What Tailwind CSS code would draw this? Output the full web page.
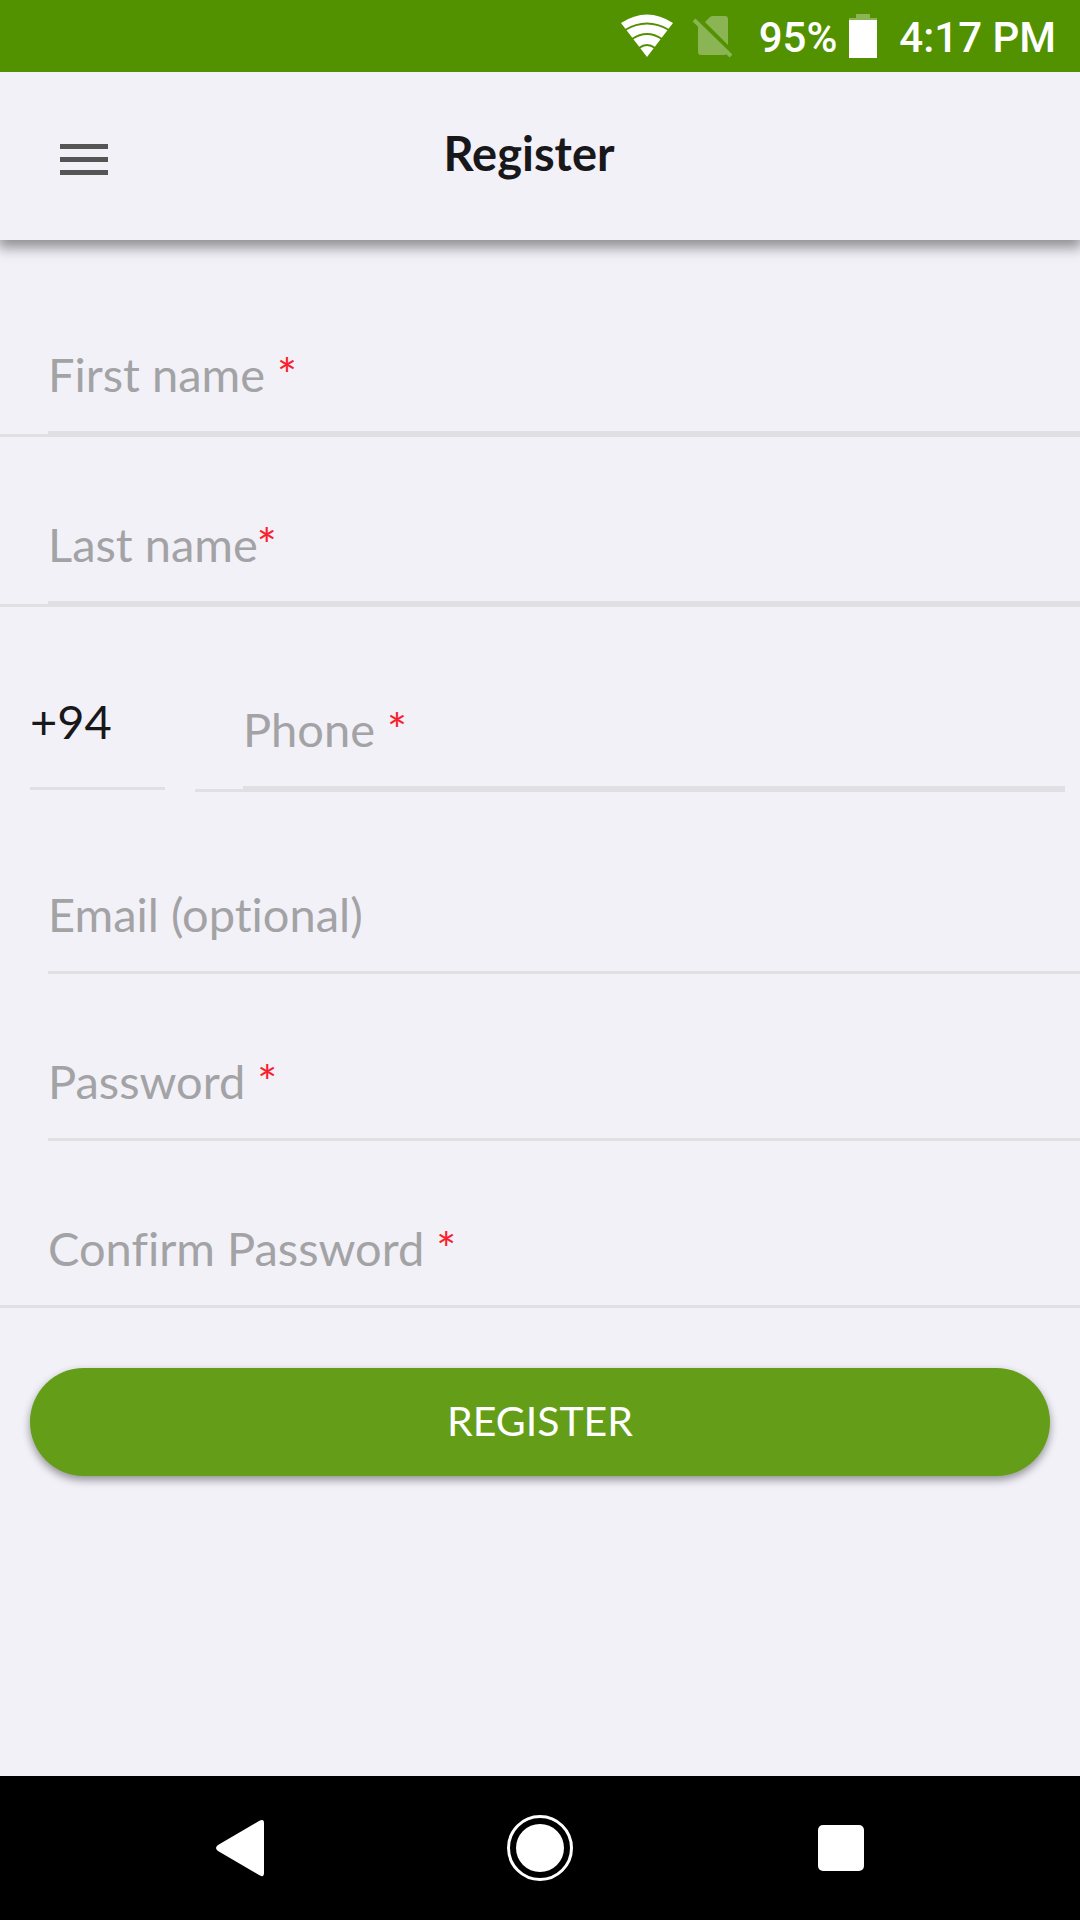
<!DOCTYPE html>
<html lang="en">

<head>
  <meta charset="UTF-8">
  <meta name="viewport" content="width=device-width, initial-scale=1.0">
  <title>Register</title>
  <script src="https://cdn.jsdelivr.net/npm/@tailwindcss/browser@4"></script>
</head>

<body class="min-h-screen flex flex-col bg-[#f2f1f8] font-['Lato','Open_Sans',sans-serif] [font-variant-ligatures:none] text-[#18181b]">

  <!-- Status Bar -->
  <div class="relative z-10 flex items-center justify-end h-[72px] pr-6 bg-[#529200] text-white font-['Roboto',sans-serif] font-medium text-[42px] leading-[68px]">
    <svg class="w-[52px] h-[44px] mr-5" viewBox="0 0 52 44" fill="none">
      <path d="M0 9Q26 -8 52 9L26 43Z" fill="#fff"/>
      <path d="M4 16Q26 3 48 16M11 25Q26 15 41 25M18 34Q26 28 34 34" stroke="#529200" stroke-width="2"/>
    </svg>
    <svg class="w-[40px] h-[44px] mr-[26px]" viewBox="0 0 40 44">
      <path d="M12 8L17 3Q18 2 20 2H32Q35 2 35 5V31ZM5 10L34 39L32 41H8Q5 41 5 38Z" fill="#8bb555"/>
      <path d="M1 6L38 42" stroke="#8bb555" stroke-width="4"/>
    </svg>
    <span class="pt-1">95%</span>
    <svg class="w-[28px] h-[44px] ml-3 mr-[22px]" viewBox="0 0 28 44">
      <path d="M7 0H21V4H28V6H0V4H7Z" fill="#8bb555"/>
      <path d="M0 6H28V44H0Z" fill="#fff"/>
    </svg>
    <span class="pt-1">4:17 PM</span>
  </div>

  <!-- Header -->
  <header class="flex items-start h-[168px] pt-12 pl-[60px] pr-[130px] shadow-[0_6px_12px_2px_rgba(0,0,0,0.4)]">
    <button type="button" aria-label="Menu" class="py-4">
      <svg class="w-12 h-12" viewBox="0 0 48 48" fill="#555">
        <path d="M0 8H48V13H0ZM0 21H48V26H0ZM0 34H48V39H0Z"/>
      </svg>
    </button>
    <h1 class="flex-1 text-center text-[47px] leading-[66px] font-bold">Register</h1>
  </header>

  <!-- Registration Form -->
  <main class="flex-1">
    <form class="pt-[27px] text-[47px] leading-[60px]">
      <div class="pl-12 border-b-3 border-[#e0e0e3]">
        <div class="flex pt-[77px] pb-[27px] border-b-3 border-[#e0e0e3]">
          <label for="firstName" class="text-[#a3a3a5]">First name <span class="text-[#fa1f2d]">*</span></label>
          <input type="text" id="firstName" class="flex-1 min-w-0 outline-none">
        </div>
      </div>

      <div class="pl-12 border-b-3 border-[#e0e0e3]">
        <div class="flex pt-[77px] pb-[27px] border-b-3 border-[#e0e0e3]">
          <label for="lastName" class="text-[#a3a3a5]">Last name<span class="text-[#fa1f2d]">*</span></label>
          <input type="text" id="lastName" class="flex-1 min-w-0 outline-none">
        </div>
      </div>

      <div class="flex items-end gap-[30px] mt-[15px] pl-[30px] pr-[15px]">
        <div class="w-[135px] pb-[2px]">
          <input type="text" aria-label="Country code" value="+94" class="block w-full h-[99px] pb-9 border-b-3 border-[#e0e0e3] outline-none">
        </div>
        <div class="flex-1 pl-12 border-b-3 border-[#e0e0e3]">
          <div class="flex pt-[77px] pb-[27px] border-b-3 border-[#e0e0e3]">
            <label for="phone" class="text-[#a3a3a5]">Phone <span class="text-[#fa1f2d]">*</span></label>
            <input type="tel" id="phone" class="flex-1 min-w-0 outline-none">
          </div>
        </div>
      </div>

      <div class="flex mt-[15px] ml-12 pt-[77px] pb-[27px] border-b-3 border-[#e0e0e3]">
        <label for="email" class="text-[#a3a3a5]">Email (optional)</label>
        <input type="email" id="email" class="flex-1 min-w-0 outline-none">
      </div>

      <div class="flex ml-12 pt-[77px] pb-[27px] border-b-3 border-[#e0e0e3]">
        <label for="password" class="text-[#a3a3a5]">Password <span class="text-[#fa1f2d]">*</span></label>
        <input type="password" id="password" class="flex-1 min-w-0 outline-none">
      </div>

      <div class="flex pl-12 pt-[77px] pb-[27px] border-b-3 border-[#e0e0e3]">
        <label for="confirmPassword" class="text-[#a3a3a5]">Confirm Password <span class="text-[#fa1f2d]">*</span></label>
        <input type="password" id="confirmPassword" class="flex-1 min-w-0 outline-none">
      </div>

      <div class="px-[30px] pt-[60px]">
        <button type="submit" class="w-full h-[108px] pb-[2px] rounded-full bg-[#649e18] text-white text-[41px] shadow-[0_4px_8px_rgba(0,0,0,0.4)]">REGISTER</button>
      </div>
    </form>
  </main>

  <!-- Navigation Bar -->
  <nav class="grid grid-cols-[1fr_66px_1fr] items-center h-36 px-[216px] bg-black">
    <button type="button" aria-label="Back" class="justify-self-start">
      <svg class="w-12 h-[58px]" viewBox="0 0 48 58" fill="#fff">
        <path d="M2 26L43 2Q48 -1 48 4V54Q48 59 43 56L2 32Q-2 29 2 26Z"/>
      </svg>
    </button>
    <button type="button" aria-label="Home">
      <svg class="w-[66px] h-[66px]" viewBox="0 0 66 66" fill="none">
        <circle cx="33" cy="33" r="31.5" stroke="#fff" stroke-width="3"/>
        <circle cx="33" cy="33" r="24" fill="#fff"/>
      </svg>
    </button>
    <button type="button" aria-label="Recent apps" class="justify-self-end">
      <svg class="w-[46px] h-[46px]" viewBox="0 0 46 46">
        <rect width="46" height="46" rx="5" fill="#fff"/>
      </svg>
    </button>
  </nav>

</body>
</html>
